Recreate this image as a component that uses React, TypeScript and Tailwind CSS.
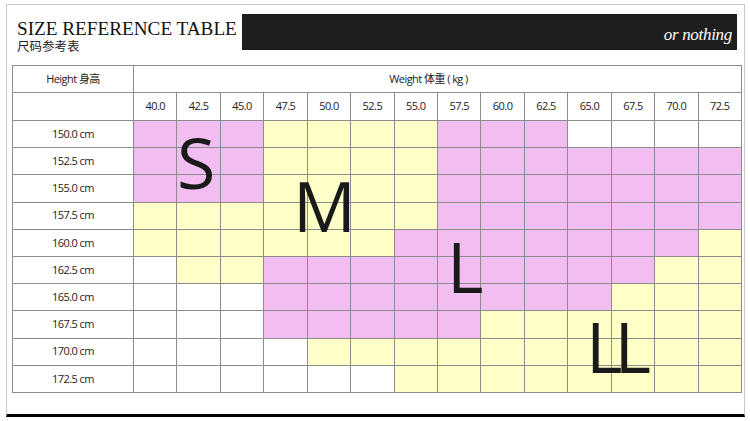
const WEIGHTS = ['40.0', '42.5', '45.0', '47.5', '50.0', '52.5', '55.0', '57.5', '60.0', '62.5', '65.0', '67.5', '70.0', '72.5']

// p = pink (S / L), y = yellow (M / LL), w = no size
const ROWS = [
  { height: '150.0', cells: 'pppyyyypppwwww' },
  { height: '152.5', cells: 'pppyyyyppppppp' },
  { height: '155.0', cells: 'pppyyyyppppppp' },
  { height: '157.5', cells: 'yyyyyyyppppppp' },
  { height: '160.0', cells: 'yyyyyypppppppy' },
  { height: '162.5', cells: 'wyypppppppppyy' },
  { height: '165.0', cells: 'wwwppppppppyyy' },
  { height: '167.5', cells: 'wwwpppppyyyyyy' },
  { height: '170.0', cells: 'wwwwyyyyyyyyyy' },
  { height: '172.5', cells: 'wwwwwwyyyyyyyy' },
]

const CELL_BG = {
  p: 'bg-[#f2bdf0]',
  y: 'bg-[#ffffc8]',
  w: 'bg-white',
} as const

const SIZE_MARKS = [
  { label: 'S', className: 'left-[165px] top-[62px]' },
  { label: 'M', className: 'left-[281px] top-[105px]' },
  { label: 'L', className: 'left-[435px] top-[166px]' },
  { label: 'LL', className: 'left-[574px] top-[246px] tracking-[-8px]' },
]

const cellText = "text-[11px] tracking-[-0.05em] text-[#222] font-['Open_Sans','Noto_Sans_CJK_SC',sans-serif]"

export default function App() {
  return (
    <div className="h-[421px] w-[750px] overflow-hidden bg-white pl-[6px] pt-[4px]">
      <div className="flex h-[413px] w-[739px] flex-col border-x border-t border-b-[3px] border-[#c8c8c8] border-b-black">
        {/* Title strip */}
        <div className="flex h-[60px]">
          <div className="w-[235px] pl-[10px] pt-[15px]">
            <div className="whitespace-nowrap font-['Liberation_Serif',serif] text-[19.2px] leading-[18px] text-[#111]">
              SIZE REFERENCE TABLE
            </div>
            <div className="mt-[1px] font-['Noto_Sans_CJK_SC',sans-serif] text-[12.5px] leading-[13px] text-[#222]">
              尺码参考表
            </div>
          </div>
          <div className="mt-[9px] flex h-[36px] w-[495px] items-end justify-end bg-[#1e1e1e] pb-[7px] pr-[5px]">
            <span className="font-['Liberation_Serif',serif] text-[17px] italic leading-[17px] tracking-[-0.3px] text-white">
              or nothing
            </span>
          </div>
        </div>

        {/* Size grid */}
        <div className="relative ml-[5px] w-[730px]">
          <div className="grid h-[328px] grid-cols-[120px_repeat(14,minmax(0,1fr))] grid-rows-[26px_27px_repeat(10,minmax(0,1fr))] gap-px border border-[#8c8c8c] bg-[#8c8c8c]">
            <div className={`flex items-center justify-center bg-white ${cellText}`}>Height 身高</div>
            <div className={`col-span-14 flex items-center justify-center bg-white pr-[18px] ${cellText}`}>
              Weight 体重 ( kg )
            </div>
            <div className="bg-white" />
            {WEIGHTS.map((w) => (
              <div key={w} className={`flex items-center justify-center bg-white ${cellText}`}>
                {w}
              </div>
            ))}
            {ROWS.map((row) => (
              <div key={row.height} className="contents">
                <div className={`flex items-center justify-center bg-white ${cellText}`}>{row.height} cm</div>
                {row.cells.split('').map((c, i) => (
                  <div key={i} className={CELL_BG[c as keyof typeof CELL_BG]} />
                ))}
              </div>
            ))}
          </div>

          {SIZE_MARKS.map((mark) => (
            <span
              key={mark.label}
              className={`pointer-events-none absolute font-['Open_Sans',sans-serif] text-[70px] leading-none text-[#1a1a1a] ${mark.className}`}
            >
              {mark.label}
            </span>
          ))}
        </div>
      </div>
    </div>
  )
}
